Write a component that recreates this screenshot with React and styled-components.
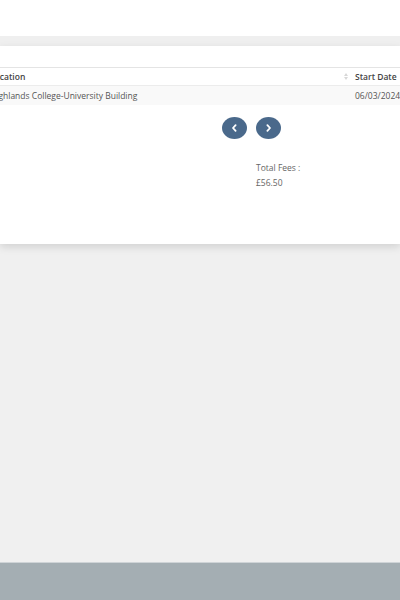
import React from 'react';
import styled, { createGlobalStyle } from 'styled-components';

const GlobalStyle = createGlobalStyle`
  html, body {
    margin: 0;
    padding: 0;
    background: #f0f0f0;
    font-family: 'Open Sans', 'Liberation Sans', sans-serif;
    color: #555;
  }
  * { box-sizing: border-box; }
`;

const Page = styled.div`
  display: flex;
  flex-direction: column;
  min-height: 600px;
  overflow: hidden;
`;

const TopBar = styled.div`
  height: 36px;
  background: #fff;
`;

const Strip = styled.div`
  height: 10px;
  background: #efefef;
`;

const Card = styled.div`
  height: 198px;
  background: #fff;
  padding-top: 21px;
  box-shadow: 0 3px 8px rgba(0, 0, 0, 0.13);
  position: relative;
`;

const TableWrap = styled.div`
  overflow: hidden;
`;

const Table = styled.table`
  margin-left: -10px;
  width: 420px;
  border-collapse: collapse;
  font-size: 8.5px;
  color: #555;
`;

const Th = styled.th`
  text-align: left;
  font-weight: 600;
  height: 18px;
  padding: 0;
  border-top: 1px solid #e4e4e4;
  border-bottom: 1px solid #ececec;
  color: #444;
  width: ${p => p.$w || 'auto'};
  white-space: nowrap;
`;

const HeadCell = styled.span`
  display: flex;
  justify-content: space-between;
  align-items: center;
`;

const Td = styled.td`
  height: 19px;
  padding: 0;
  background: #f9f9f9;
  white-space: nowrap;
  color: #555;
`;

const SortIcon = styled.span`
  display: inline-flex;
  flex-direction: column;
  align-items: center;
  gap: 1px;
  margin-right: 7px;

  i {
    width: 0;
    height: 0;
    border-left: 2.5px solid transparent;
    border-right: 2.5px solid transparent;
  }
  i:first-child { border-bottom: 3px solid #d8d8d8; }
  i:last-child { border-top: 3px solid #d8d8d8; }
`;

const Pager = styled.div`
  display: flex;
  gap: 9px;
  padding-left: 222px;
  margin-top: 12px;
`;

const PageButton = styled.button`
  width: 25px;
  height: 22px;
  border-radius: 50%;
  border: none;
  padding: 0;
  background: #4a698b;
  display: flex;
  align-items: center;
  justify-content: center;
  cursor: pointer;
`;

const Totals = styled.div`
  padding-left: 256px;
  margin-top: 21px;
  font-size: 8.5px;
  color: #666;
  line-height: 15px;
`;

const Filler = styled.div`
  flex: 1;
`;

const Footer = styled.div`
  height: 38px;
  background: #a4aeb3;
  border-top: 1px solid #cfd4d7;
`;

const Chevron = ({ dir }) => (
  <svg width="7" height="8" viewBox="0 0 7 8">
    <path
      d={dir === 'left' ? 'M4.6 1.2 L2 4 L4.6 6.8' : 'M2.4 1.2 L5 4 L2.4 6.8'}
      fill="none"
      stroke="#fff"
      strokeWidth="1.8"
      strokeLinecap="round"
      strokeLinejoin="round"
    />
  </svg>
);

const App = () => (
  <>
    <GlobalStyle />
    <Page>
      <TopBar />
      <Strip />
      <Card>
        <TableWrap>
          <Table>
            <thead>
              <tr>
                <Th $w="365px">
                  <HeadCell>
                    Location
                    <SortIcon><i /><i /></SortIcon>
                  </HeadCell>
                </Th>
                <Th>Start Date</Th>
              </tr>
            </thead>
            <tbody>
              <tr>
                <Td>Highlands College-University Building</Td>
                <Td>06/03/2024</Td>
              </tr>
            </tbody>
          </Table>
        </TableWrap>
        <Pager>
          <PageButton aria-label="Previous"><Chevron dir="left" /></PageButton>
          <PageButton aria-label="Next"><Chevron dir="right" /></PageButton>
        </Pager>
        <Totals>
          <div>Total Fees :</div>
          <div>£56.50</div>
        </Totals>
      </Card>
      <Filler />
      <Footer />
    </Page>
  </>
);

export default App;
